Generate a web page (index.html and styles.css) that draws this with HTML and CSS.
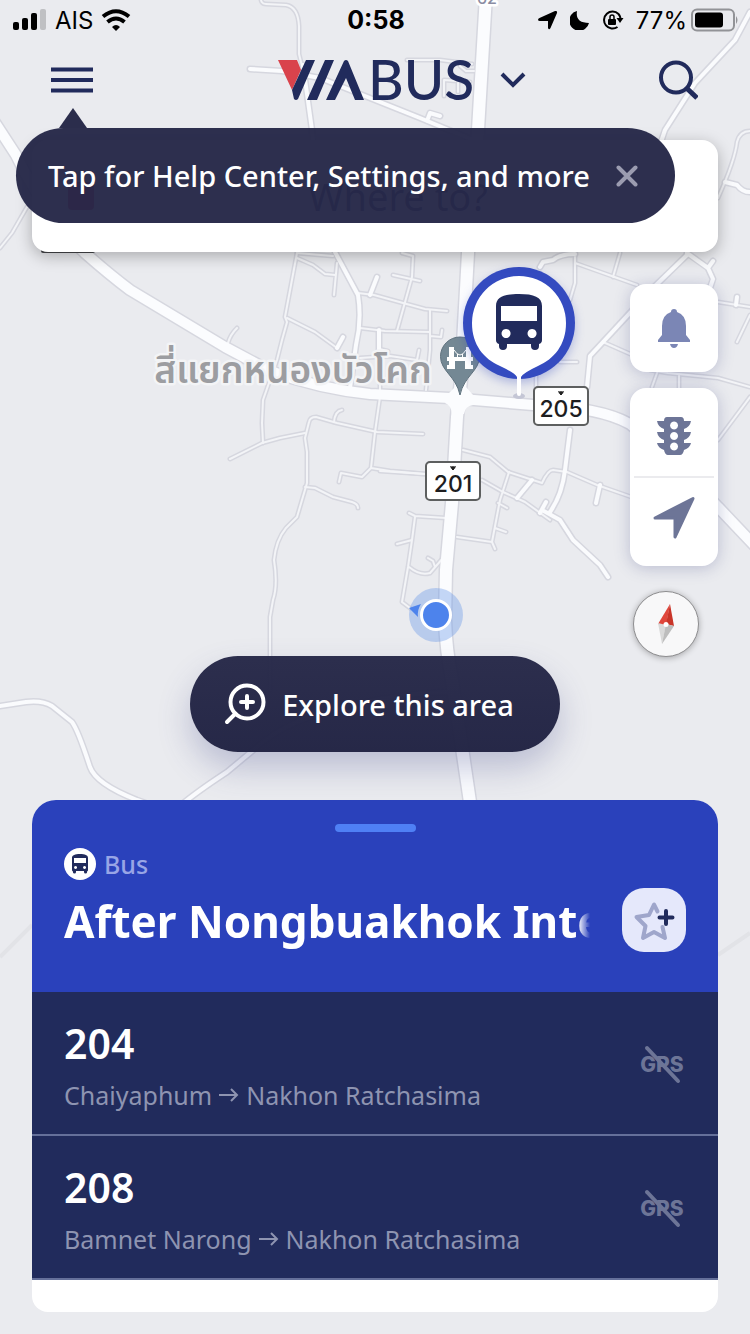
FILE: index.html
```html
<!DOCTYPE html>
<html lang="en">
<head>
<meta charset="utf-8">
<meta name="viewport" content="width=device-width, initial-scale=1">
<title>ViaBus</title>
<link rel="stylesheet" href="styles.css">
</head>
<body>
<div class="app">
  <svg class="map" viewBox="0 0 750 1334" preserveAspectRatio="xMidYMin slice" role="img" aria-label="Map">
    <defs>
      <g id="minor">
        <path d="M261 -4Q260 4 266 4L286 5Q298 7 299 26V54L303 70"/>
        <path d="M407 60L440 60L472 64M444 96V80L470 82M458 92V82M460 66L466 71L474 71"/>
        <path d="M752 131Q740 130 737 142Q735 160 718 198"/>
        <path d="M27 207L12 233L0 248"/>
        <path d="M297 253L285 317L287 322L282 340L277 360L263 400L262 423L263 443"/>
        <path d="M230 459L262 443L280 438L305 433"/>
        <path d="M423 434L377 432L337 423L316 417Q310 417 309 422L305 438L307 452V483L297 517L286 528Q276 540 274 560Q278 585 273 600L270 617V690"/>
        <path d="M334 422Q335 411 342 410M305 487L315 488L333 497L352 502Q358 504 358 508"/>
        <path d="M380 397L375 432L371 468L362 477L341 473L339 482M371 468L390 471L425 474"/>
        <path d="M297 258L313 265L325 274L335 275M297 253L333 256M337 263L334 295"/>
        <path d="M358 293L374 295L403 303L425 309L447 311M402 253L413 256L412 277L397 331M393 275L420 281"/>
        <path d="M360 328L385 331L430 332M430 310V350L426 390M430 336L441 337L442 330"/>
        <path d="M287 318L315 332L337 348M360 358L390 356L417 360L419 350M380 350V397M228 343Q230 335 237 328"/>
        <path d="M575 257V283L570 300M575 263L637 285M620 253L613 277M718 302L750 307M750 315L737 342"/>
        <path d="M603 342L637 357M650 370L668 373L718 378L750 387M750 397L718 440M657 373L652 387M679 374V390"/>
        <path d="M463 450L490 457L508 472L542 483Q548 470 553 470L567 472L597 485L640 500"/>
        <path d="M482 480L503 492L525 502L550 520M509 472L500 500L492 542M498 503L507 508M495 528L506 532M457 537L492 542L495 549"/>
        <path d="M446 518L415 516L409 513M415 517L412 540L408 567L402 602L410 608M412 540L397 544M409 567Q420 576 430 573L443 558M435 567L433 561L428 558M380 471L425 474"/>
        <path d="M560 362L577 362M536 375V390"/>
      </g>
      <g id="street">
        <path d="M250 69L282 71L320 78L375 100L420 118L478 142M427 121L430 113L440 116"/>
        <path d="M303 65L312 130Q318 200 335 252L358 295Q362 320 356 345L350 388"/>
        <path d="M750 12L735 40L695 83L665 130L655 160"/>
        <path d="M725 182L737 185Q743 193 752 192"/>
        <path d="M687 255L653 288L603 342L590 356L587 387"/>
        <path d="M687 253L708 268L713 261M708 268L713 279L710 288M737 297L736 305"/>
        <path d="M540 267L543 262L553 260Q560 254 575 254"/>
        <path d="M570 430L565 470Q562 495 550 512M600 485L596 503M532 480L517 498"/>
        <path d="M540 513L546 502M542 510L560 520L573 540L600 565L608 577"/>
        <path d="M370 295L377 277M379 330V350L387 352M337 348L343 337"/>
        <path d="M0 706L26 702Q42 700 52 706L72 722Q78 730 90 767Q96 784 137 800L170 812"/>
        <path d="M180 806Q195 793 227 772L263 742Q280 728 310 717Q380 694 447 692"/>
      </g>
      <g id="highway">
        <path d="M-10 115L16 155Q45 215 85 253Q110 275 130 290L225 347L270 371Q320 389 370 394L450 398L533 405Q600 407 630 424Q680 465 718 507L755 546"/>
      </g>
      <g id="trunk">
        <path d="M486 -5L478 130L468 253L461 380L457 417L452 503L446 570L445 620Q446 650 452 680L470 802"/>
      </g>
    </defs>
    <path class="faint-road" d="M0 957L32 925M718 955L750 933"/>
    <use href="#minor" class="minor-edge"/>
    <use href="#street" class="street-edge"/>
    <use href="#highway" class="highway-edge"/>
    <use href="#trunk" class="trunk-edge"/>
    <use href="#minor" class="minor-fill"/>
    <use href="#street" class="street-fill"/>
    <use href="#highway" class="highway-fill"/>
    <use href="#trunk" class="trunk-fill"/>
    <path class="junction" d="M448 394L455 387H466L473 395V405Q465 406 464 414H452Q451 405 445 403z"/>

    <text class="road-mark" x="477" y="4">62</text>
    <text class="place" x="293" y="383" text-anchor="middle">สี่แยกหนองบัวโคก</text>

    <g>
      <path d="M460 395C456 376 440.500 371 440.500 356.500A19.500 19.500 0 0 1 479.500 356.500C479.500 371 464 376 460 395z" fill="#748894" stroke="#5f727e"/>
      <path d="M449 347h5v10h12v-10h5v10h2v4h-2v4h2v4h-8v-8h-10v8h-8v-4h2v-4h-2v-4h2z" fill="#fff"/>
      <path d="M454 350Q460 360 466 350M457.500 354v4M462.500 354v4" fill="none" stroke="#fff"/>
    </g>

    <ellipse cx="519" cy="396" rx="6" ry="3" fill="#c4c6d5"/>
    <circle class="stop-ring" cx="519" cy="323" r="56"/>
    <path d="M519 276a47 47 0 0 1 47 47c0 22-12 36-28 43q-15 7-17 11v17a2 2 0 0 1-4 0v-17q-2-4-17-11c-16-7-28-21-28-43a47 47 0 0 1 47-47z" fill="#fff"/>
    <path fill-rule="evenodd" fill="#212b5c" d="M496 306c0-9 8-12 23-12s23 3 23 12v34q0 3-3 4v2q0 4-4 4t-4-4v-2h-24v2q0 4-4 4t-4-4v-2q-3-1-3-4zM501 306v15h36v-15zM506 329a4.500 4.500 0 1 0 .1 0zM532 329a4.500 4.500 0 1 0 .1 0z"/>

    <g class="shield">
      <rect x="534" y="387" width="54" height="38" rx="4"/>
      <path d="M558 391l2 .5 1-.5 1 .5 2-.5-1 2.500-1 .5v1h-2v-1l-1-.5z" class="crest"/>
      <text x="561" y="417" text-anchor="middle">205</text>
    </g>
    <g class="shield">
      <rect x="426" y="462" width="54" height="38" rx="4"/>
      <path d="M450 466l2 .5 1-.5 1 .5 2-.5-1 2.500-1 .5v1h-2v-1l-1-.5z" class="crest"/>
      <text x="453" y="492" text-anchor="middle">201</text>
    </g>

    <circle cx="436" cy="615" r="27" fill="#5b8fe8" opacity=".35"/>
    <path d="M409 608L421 604Q417 610 418 617z" fill="#4d83ec"/>
    <circle cx="436" cy="615" r="14.500" fill="#4d83ec" stroke="#fff" stroke-width="3"/>
  </svg>

  <div class="status">
    <div class="status-side">
      <svg width="34" height="22" viewBox="0 0 34 22"><rect y="13" width="6" height="8" rx="2"/><rect x="9" y="9" width="6" height="12" rx="2"/><rect x="18" y="4" width="6" height="17" rx="2"/><rect x="27" width="6" height="21" rx="2" fill="#bfc0c3"/></svg>
      <span>AIS</span>
      <svg class="wifi" width="30" height="22" viewBox="0 0 30 22"><path d="M15 22l-4-4q4-4 8 0z"/><path d="M2 7.500q13-10.500 26 0M6.500 13q8.500-7 17 0" fill="none" stroke="#000" stroke-width="4"/></svg>
    </div>
    <time class="clock">0:58</time>
    <div class="status-side status-right">
      <svg width="20" height="20" viewBox="0 0 20 20"><path d="M0 10Q0 8.500 1.500 8L17 1q2.500-.6 2 2L12.500 18q-1.500 2.500-2.500 0V11H2Q.3 11 0 10z"/></svg>
      <svg width="20" height="20" viewBox="0 0 20 20"><path d="M7 1Q5 13 19 13A10 10 0 1 1 7 1z"/></svg>
      <svg width="22" height="20" viewBox="0 0 22 20"><path d="M16.500 4A8.500 8.500 0 1 0 15.500 17M16.500 4A9 9 0 0 1 18.500 8" fill="none" stroke="#000" stroke-width="2"/><path d="M14.500 8h7L18 13z"/><rect x="6" y="9" width="8" height="6" rx="1"/><path d="M8 9V7a2 2 0 0 1 4 0v2" fill="none" stroke="#000" stroke-width="1.500"/></svg>
      <span>77%</span>
      <svg width="48" height="24" viewBox="0 0 48 24"><rect x="1" y="1.500" width="42" height="21" rx="5" fill="none" stroke="#929397" stroke-width="2"/><rect x="4" y="4.500" width="28" height="15" rx="3"/><path d="M45 8q3 4 0 8z" fill="#929397"/></svg>
    </div>
  </div>

  <header class="header">
    <button class="icon-button" aria-label="Menu">
      <svg width="42" height="26" viewBox="0 0 42 26"><path d="M0 2.500h42M0 13h42M0 23.500h42" stroke="#212b5c" stroke-width="4"/></svg>
    </button>
    <button class="brand" aria-label="ViaBus, change city">
      <svg class="brand-mark" width="194" height="42" viewBox="0 0 194 42"><path d="M0 1H19L23 11 14 31z" fill="#d9434c"/><path d="M14 31L28 1H37L20 40q-2 2-4 0zM29 41L47 1H56L39 41zM48 41L66 2q2-2 4 0L86 41H77L68 19 57 41z" fill="#212b5c"/><text x="90" y="41">BUS</text></svg>
      <svg width="26" height="16" viewBox="0 0 26 16"><path d="M2 2L13 13 24 2" fill="none" stroke="#212b5c" stroke-width="4"/></svg>
    </button>
    <button class="icon-button" aria-label="Search">
      <svg width="40" height="40" viewBox="0 0 40 40"><circle cx="18" cy="17.500" r="15" fill="none" stroke="#212b5c" stroke-width="4"/><path d="M28.500 28L39 38" stroke="#212b5c" stroke-width="5"/></svg>
    </button>
  </header>

  <section class="search">
    <button class="search-card">
      <svg width="26" height="28" viewBox="0 0 26 28"><rect width="26" height="28" rx="4" fill="#d9143c"/></svg>
      <span>Where to?</span>
    </button>
    <div class="tip" role="status">
      <span>Tap for Help Center, Settings, and more</span>
      <button class="tip-close" aria-label="Close">
        <svg width="22" height="22" viewBox="0 0 22 22"><path d="M2.500 2.500l17 17M19.500 2.500l-17 17" stroke="#9b9cb0" stroke-width="4" stroke-linecap="round"/></svg>
      </button>
    </div>
  </section>

  <div class="controls">
    <button class="tile" aria-label="Notifications">
      <svg width="32" height="40" viewBox="0 0 32 40"><path d="M13 4a3 3 0 0 1 6 0q9 3 9 14v9l4 5v2H0v-2l4-5v-9Q4 7 13 4zM12 36h8q-1 4-4 4t-4-4z" fill="#7b86b5"/></svg>
    </button>
    <div class="tile-group">
      <button class="tile-part" aria-label="Traffic">
        <svg width="34" height="38" viewBox="0 0 34 38"><path fill-rule="evenodd" fill="#6d7597" d="M10 0h14q3 0 3 4h7q-1 6-7 8v3h7q-1 6-7 8v3h7q-1 5-7 7-1 5-4 5H11q-3 0-4-5-6-2-7-7h7v-3q-6-2-7-8h7v-3Q1 10 0 4h7q0-4 3-4zM17 4.500a4 4 0 1 0 .1 0zM17 15a4 4 0 1 0 .1 0zM17 25.500a4 4 0 1 0 .1 0z"/></svg>
      </button>
      <button class="tile-part" aria-label="My location">
        <svg width="44" height="44" viewBox="0 0 44 44"><path d="M41 2.500L23 41V22H3z" fill="#6d7597" stroke="#6d7597" stroke-width="3" stroke-linejoin="round"/></svg>
      </button>
    </div>
    <button class="compass" aria-label="Reset north">
      <svg width="18" height="40" viewBox="0 0 18 40"><path d="M13 0L1 20l8 2z" fill="#e0473c"/><path d="M13 0L17 22l-8-2z" fill="#c93529"/><path d="M1 19l4 21 4-19z" fill="#d9d9d9"/><path d="M17 22L5 40l4-20z" fill="#bdbdbd"/><circle cx="9" cy="20.500" r="2.500" fill="#fff"/></svg>
    </button>
  </div>

  <button class="explore">
    <svg width="42" height="42" viewBox="0 0 42 42" fill="none" stroke="#fff" stroke-width="4" stroke-linecap="round"><circle cx="23" cy="19" r="16.500"/><path d="M11.500 30.500L3 39M23 13v12M17 19h12"/></svg>
    <span>Explore this area</span>
  </button>

  <main class="sheet">
    <div class="sheet-head">
      <div class="grabber"></div>
      <div class="kind">
        <svg width="32" height="32" viewBox="0 0 32 32"><circle cx="16" cy="16" r="16" fill="#fff"/><path fill-rule="evenodd" fill="#212b5c" d="M8 10c0-3 3-4 8-4s8 1 8 4v12q0 1-1 1.500v1q0 1-1.500 1T20 24v-1h-8v1q0 1.500-1.500 1.500T9 24.500v-1Q8 23 8 22zM10 10v5h12v-5zM11.500 18a1.500 1.500 0 1 0 .1 0zM20.500 18a1.500 1.500 0 1 0 .1 0z"/></svg>
        <span>Bus</span>
      </div>
      <div class="title-row">
        <h1>After Nongbuakhok Intersection</h1>
        <button class="favorite" aria-label="Add to favorites">
          <svg width="44" height="42" viewBox="0 0 44 42" fill="none" stroke-width="4" stroke-linecap="round" stroke-linejoin="round"><path d="M25.500 12.500L22 5.500 17 16 4.500 18l9 9L11 39l11-6 11 6-2.500-11" stroke="#9fa6cb"/><path d="M34 12v13M27.500 18.500h13" stroke="#212b5c"/></svg>
        </button>
      </div>
    </div>
    <ul class="routes">
      <li class="route">
        <div><h2>204</h2><p>Chaiyaphum <svg class="arrow" width="20" height="14" viewBox="0 0 20 14"><path d="M0 7h18M12 1l6 6-6 6"/></svg> Nakhon Ratchasima</p></div>
        <svg class="gps" width="46" height="40" viewBox="0 0 46 40" role="img" aria-label="No GPS"><text x="22" y="28" text-anchor="middle">GPS</text><path d="M7 4l31 33"/></svg>
      </li>
      <li class="route">
        <div><h2>208</h2><p>Bamnet Narong <svg class="arrow" width="20" height="14" viewBox="0 0 20 14"><path d="M0 7h18M12 1l6 6-6 6"/></svg> Nakhon Ratchasima</p></div>
        <svg class="gps" width="46" height="40" viewBox="0 0 46 40" role="img" aria-label="No GPS"><text x="22" y="28" text-anchor="middle">GPS</text><path d="M7 4l31 33"/></svg>
      </li>
    </ul>
  </main>
</div>
</body>
</html>
```
FILE: styles.css
```css
* { box-sizing: border-box; }
body { margin: 0; background: #eaebef; font-family: "Noto Sans", "Open Sans", sans-serif; }
button { font: inherit; border: 0; padding: 0; background: none; color: inherit; }
svg { display: block; flex: none; }
h1, h2, p, ul { margin: 0; padding: 0; }

.app { position: relative; z-index: 0; min-height: 100vh; display: flex; flex-direction: column; padding-bottom: 22px; overflow: hidden; }

/* Map */
.map { position: absolute; inset: 0; width: 100%; height: 100%; z-index: -1; }
.map use { fill: none; stroke-linejoin: round; stroke-linecap: round; }
.minor-edge { stroke: #d6d7df; stroke-width: 5; }
.minor-fill { stroke: #f3f4f7; stroke-width: 2; }
.street-edge { stroke: #d6d7df; stroke-width: 7; }
.street-fill { stroke: #fafbfd; stroke-width: 4; }
.highway-edge { stroke: #d6d7df; stroke-width: 13; }
.highway-fill { stroke: #fbfcfe; stroke-width: 10; }
.trunk-edge { stroke: #d6d7df; stroke-width: 15; }
.trunk-fill { stroke: #fbfcfe; stroke-width: 12; }
.faint-road { fill: none; stroke: #e2e3e7; stroke-width: 4; }
.junction { fill: #fbfcfe; }
.road-mark { font: 500 16px Inter, sans-serif; fill: #8b8da3; stroke: #fff; stroke-width: 5; paint-order: stroke; stroke-linejoin: round; }
.place { font: 600 37px "Noto Sans Thai", "Noto Sans", sans-serif; fill: #9c9da1; stroke: #f3f4f6; stroke-width: 5; paint-order: stroke; stroke-linejoin: round; }
.stop-ring { fill: #344bc0; filter: drop-shadow(0 4px 5px rgba(42, 65, 187, .3)); }
.shield rect { fill: #fff; stroke: #5d5f5f; stroke-width: 2; }
.shield .crest { fill: #222; }
.shield text { font: 500 23px Inter, sans-serif; fill: #1d1d1f; }

/* Status bar */
.status { display: grid; grid-template-columns: 1fr auto 1fr; align-items: center; height: 40px; padding: 0 11px 0 13px; font: 400 24px Inter, sans-serif; color: #000; }
.status-side { display: flex; align-items: center; gap: 8px; }
.status-right { justify-content: flex-end; gap: 12px; }
.status-right span { margin-right: -8px; }
.clock { font-size: 25px; font-weight: 700; }

/* Header */
.header { display: grid; grid-template-columns: 44px 1fr 40px; align-items: center; height: 80px; margin-bottom: 20px; padding: 0 52px 0 51px; color: #212b5c; }
.icon-button { display: flex; justify-content: flex-start; }
.brand { display: flex; justify-content: center; align-items: center; gap: 28px; padding-left: 50px; }
.brand-mark { overflow: visible; }
.brand-mark text { font: 500 55px Lato, sans-serif; fill: #212b5c; }

/* Search card and its tooltip */
.search { position: relative; margin: 0 32px; }
.search::before { content: ""; position: absolute; z-index: -1; left: 9px; bottom: -1px; width: 54px; height: 4px; border-radius: 2px; background: #45464a; }
.search-card { display: flex; align-items: center; width: 100%; height: 112px; padding: 0 16px 0 36px; border-radius: 16px; background: #fff; box-shadow: 0 4px 16px rgba(0, 0, 0, .28); font-size: 38px; color: #212b5c; }
.search-card span { flex: 1; }
.tip { position: absolute; left: -16px; top: -12px; display: flex; align-items: center; gap: 26px; height: 95px; padding: 0 37px 0 32px; border-radius: 48px; background: rgba(38, 40, 72, .97); color: #fff; font-size: 29px; font-weight: 500; white-space: nowrap; }
.tip::before { content: ""; position: absolute; left: 43px; bottom: 100%; border: 14px solid transparent; border-top: 0; border-bottom: 20px solid #2b2d4c; }

/* Map controls */
.controls { display: flex; flex-direction: column; align-items: flex-end; gap: 16px; margin: 32px 32px auto; }
.tile, .tile-group { width: 88px; border-radius: 16px; background: #fff; box-shadow: 0 2px 16px rgba(60, 70, 130, .28); }
.tile { display: grid; place-items: center; height: 88px; }
.tile-group { padding: 0 4px; }
.tile-part { display: grid; place-items: center; width: 100%; height: 88px; padding-top: 8px; }
.tile-part + .tile-part { height: 90px; padding: 0 0 8px; border-top: 2px solid #ebebee; }
.compass { display: grid; place-items: center; width: 66px; height: 66px; margin: 9px 19px 0 0; border: 1px solid #8e8e90; border-radius: 50%; background: #f8f8f9; box-shadow: 0 1px 6px rgba(0, 0, 0, .3); }

.explore { align-self: center; display: flex; align-items: center; gap: 16px; height: 96px; padding: 0 46px 0 34px; margin-top: -1px; margin-bottom: 48px; border-radius: 48px; background: linear-gradient(rgba(38, 40, 72, .97), rgba(34, 36, 68, .98)); box-shadow: 0 16px 32px rgba(70, 75, 140, .28); color: #fff; font-size: 29px; font-weight: 500; }

/* Stop sheet */
.sheet { margin: 0 32px; padding-bottom: 32px; border-radius: 24px 24px 16px 16px; background: #fff; overflow: hidden; }
.sheet-head { height: 192px; padding: 24px 32px 0; background: #2a41bb; }
.grabber { width: 81px; height: 8px; margin: 0 auto 16px; border-radius: 4px; background: #4f80f5; }
.kind { display: flex; align-items: center; gap: 8px; height: 32px; font-size: 25px; font-weight: 500; color: #98a5e6; }
.title-row { display: flex; align-items: flex-start; gap: 32px; margin-top: 8px; }
h1 { flex: 1; min-width: 0; overflow: hidden; white-space: nowrap; font-size: 44px; line-height: 66px; font-weight: 700; color: #fff; -webkit-mask-image: linear-gradient(to left, transparent, #000 12px); mask-image: linear-gradient(to left, transparent, #000 12px); }
.favorite { display: grid; place-items: center; flex: none; width: 64px; height: 64px; border-radius: 22px; background: #e5e8fb; }
.routes { list-style: none; }
.route { display: flex; align-items: center; justify-content: space-between; height: 144px; padding: 2px 32px 0; border-bottom: 2px solid #65709a; background: #212b5c; }
h2 { padding-top: 6px; font-size: 41px; line-height: 56px; font-weight: 600; color: #fff; }
.route p { display: flex; align-items: center; gap: 7px; font-size: 25px; line-height: 48px; color: #8e94b1; }
.arrow { fill: none; stroke: #8e94b1; stroke-width: 2; }
.gps text { font: 800 21px Inter, sans-serif; fill: #6d7597; }
.gps path { stroke: #6d7597; stroke-width: 4; stroke-linecap: round; }
```
